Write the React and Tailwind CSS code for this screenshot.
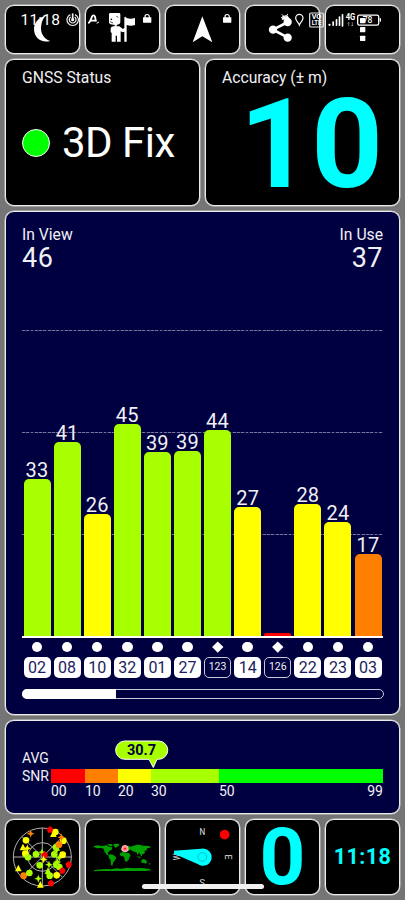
import clsx from 'clsx';

const SATELLITES = [
  { id: '02', snr: 33, height: 157.5, color: 'bg-[#a8ff00]' },
  { id: '08', snr: 41, height: 194.5, color: 'bg-[#a8ff00]' },
  { id: '10', snr: 26, height: 122.5, color: 'bg-[#ffff00]' },
  { id: '32', snr: 45, height: 212, color: 'bg-[#a8ff00]' },
  { id: '01', snr: 39, height: 184.5, color: 'bg-[#a8ff00]' },
  { id: '27', snr: 39, height: 185.5, color: 'bg-[#a8ff00]' },
  { id: '123', snr: 44, height: 206, color: 'bg-[#a8ff00]', sbas: true },
  { id: '14', snr: 27, height: 129.5, color: 'bg-[#ffff00]' },
  { id: '126', snr: null, height: 3, color: 'bg-[#ff0000]', sbas: true },
  { id: '22', snr: 28, height: 132.5, color: 'bg-[#ffff00]' },
  { id: '23', snr: 24, height: 114.5, color: 'bg-[#ffff00]' },
  { id: '03', snr: 17, height: 82.5, color: 'bg-[#ff8000]' },
];

const SCALE = [
  { label: '00', className: 'w-[34px] bg-[#ff0000]' },
  { label: '10', className: 'w-[33px] bg-[#ff8000]' },
  { label: '20', className: 'w-[33px] bg-[#ffff00]' },
  { label: '30', className: 'w-[68px] bg-[#a8ff00]' },
  { label: '50', className: 'w-[164px] bg-[#00ff00]' },
];

// [shape, x, y, color]
const SKY = [
  ['c', 78, 76, '#ffff00'],
  ['t', 69, 97, '#ffff00'],
  ['s', 82, 100, '#ffff00'],
  ['c', 76, 116, '#ffff00'],
  ['c', 84, 127, '#a8ff00'],
  ['s', 92, 56, '#ff8000'],
  ['c', 166, 51, '#ffff00'],
  ['t', 160, 57, '#ffff00'],
  ['p', 150, 44, '#ff0000'],
  ['c', 190, 77, '#ffff00'],
  ['s', 184, 67, '#ff8000'],
  ['c', 168, 97, '#a8ff00'],
  ['c', 177, 89, '#ff8000'],
  ['c', 108, 118, '#a8ff00'],
  ['s', 126, 112, '#a8ff00'],
  ['c', 163, 118, '#a8ff00'],
  ['s', 170, 105, '#a8ff00'],
  ['s', 178, 128, '#a8ff00'],
  ['c', 188, 119, '#ffff00'],
  ['p', 134, 120, '#ff0000'],
  ['s', 131, 133, '#ffff00'],
  ['c', 119, 151, '#a8ff00'],
  ['s', 147, 149, '#a8ff00'],
  ['c', 169, 149, '#a8ff00'],
  ['c', 178, 156, '#a8ff00'],
  ['s', 172, 141, '#a8ff00'],
  ['p', 206, 149, '#ff0000'],
  ['p', 187, 167, '#ff0000'],
  ['t', 55, 160, '#ffff00'],
  ['c', 71, 182, '#ff8000'],
  ['c', 88, 174, '#a8ff00'],
  ['t', 144, 168, '#a8ff00'],
  ['c', 149, 182, '#a8ff00'],
  ['c', 170, 181, '#ffff00'],
  ['s', 115, 191, '#a8ff00'],
  ['t', 121, 209, '#ffff00'],
  ['p', 153, 205, '#ff0000'],
];

const FRAME = 'overflow-hidden rounded-[9px] border border-[#ececec] shadow-[0_0_0_0.5px_#cccccc]';

function Tile({ className, children }) {
  return <div className={clsx(FRAME, 'bg-black', className)}>{children}</div>;
}

function Lock({ x }) {
  return (
    <g transform={`translate(${x} 0)`}>
      <path d="M8 54V50a6.5 6.5 0 0 1 13 0v4" fill="none" stroke="#fff" strokeWidth="3.5" />
      <rect x="2" y="52" width="25" height="16" rx="1" fill="#fff" />
    </g>
  );
}

function StatusBar() {
  return (
    <div className="absolute top-3 left-0 flex h-4 w-full items-start text-white">
      <span className="ml-[20.5px] w-[45.5px] text-[15.5px] leading-4 tracking-[0.2px]">11:18</span>
      <svg className="h-4 w-[13px]" viewBox="198 36 39 48" fill="none" stroke="#f4f4f4" strokeWidth="3.6">
        <path d="M211 44a17 17 0 1 0 14 0M212 51a10 10 0 1 0 12 0" />
        <path d="M218 40v17" strokeWidth="5" />
        <circle cx="218" cy="59" r="3" fill="#fff" />
      </svg>
      <svg className="ml-2 h-4 w-[13px]" viewBox="261 36 39 48" fill="none" stroke="#fff" strokeWidth="5.5">
        <path d="M265 70c6-5 8-12 11-20 2-5 7-5 9 0l3 15M271 62h14" />
        <path d="m290 70 7-4" strokeWidth="3" />
      </svg>
      <svg className="ml-[42px] h-4 w-[10px]" viewBox="426 36 30 48">
        <Lock x={427} />
      </svg>
      <svg className="ml-[70px] h-4 w-[10px]" viewBox="666 36 30 48">
        <Lock x={667} />
      </svg>
      <svg className="ml-12 h-4 w-[10px]" viewBox="840 36 30 48" fill="none" stroke="#fff" strokeWidth="3">
        <path d="m846 43 6 7M863 42l-4 8M843 54l7-5 9-2 7 6" />
        <path d="M848 49h16l5 10h-24z" fill="#fff" stroke="none" />
      </svg>
      <svg className="ml-[5px] h-4 w-[10px]" viewBox="885 36 30 48" fill="none" stroke="#fff" strokeWidth="3.6">
        <path d="M898 75c-3-8-11-12-11-21a11 11 0 0 1 22 0c0 9-8 13-11 21z" />
      </svg>
      <svg className="ml-1 h-4 w-[15px]" viewBox="927 36 45 48">
        <rect x="929" y="39" width="41" height="42" rx="4" fill="none" stroke="#eee" strokeWidth="3.5" />
        <text x="935" y="57" fill="#fff" fontSize="19" fontWeight="700" textLength="29" lengthAdjust="spacingAndGlyphs">
          VO
        </text>
        <text x="935" y="76" fill="#fff" fontSize="19" fontWeight="700" textLength="29" lengthAdjust="spacingAndGlyphs">
          LTE
        </text>
      </svg>
      <svg className="ml-1 h-4 w-4" viewBox="984 36 48 48" fill="#fff">
        <rect x="986" y="71" width="5" height="7" rx="2" />
        <rect x="997" y="64" width="5" height="14" rx="2" />
        <rect x="1007" y="57" width="5" height="21" rx="2" />
        <rect x="1016" y="49" width="5" height="29" rx="2" />
        <rect x="1025" y="42" width="5" height="38" rx="2" />
      </svg>
      <svg className="ml-px h-4 w-[11px]" viewBox="1035 36 33 48">
        <text x="1037" y="61" fill="#fff" fontSize="27" fontWeight="700" textLength="29" lengthAdjust="spacingAndGlyphs">
          4G
        </text>
        <path
          d="M1046 78V67m-3 3 3-3 3 3M1057 67v11m-3-3 3 3 3-3"
          fill="none"
          stroke="#aaa"
          strokeWidth="2"
        />
      </svg>
      <svg className="ml-px h-4 w-[25px]" viewBox="1071 36 75 48">
        <rect x="1073" y="45.5" width="63" height="30" rx="5" fill="none" stroke="#fff" strokeWidth="4" />
        <rect x="1139" y="54" width="4" height="11" rx="2" fill="#fff" />
        <text x="1088" y="70" fill="#fff" fontSize="26" fontWeight="500">
          78
        </text>
      </svg>
    </div>
  );
}

function Toolbar() {
  return (
    <div className="grid h-[49px] shrink-0 grid-cols-5 gap-[5px]">
      <Tile>
        <svg className="size-full" viewBox="18 18 219 141" fill="#fff">
          <path d="M137 47C115 52 102 68 102 87c0 25 20 43 49 36-18-6-28-20-28-39 0-15 5-28 14-37z" />
        </svg>
      </Tile>
      <Tile>
        <svg className="size-full" viewBox="258 18 219 141" fill="#fff">
          <path d="M331 39H357Q361 39 361 43V67Q361 72 356 73L350 75V79H358L369 87 373 84V53Q373 50 376 50L380 54Q392 59 405 54V75Q392 80 380 75V125H373V95L368 97 362 94V125H351V107H347V125H335V99L332 96V85Q334 79 340 79H344V75L332 73Q327 72 327 67V43Q327 39 331 39Z" />
          <circle cx="334" cy="58" r="2.5" fill="#000" />
          <path d="m330 65 9 4M349 49l6 3" fill="none" stroke="#000" strokeWidth="2" />
        </svg>
      </Tile>
      <Tile>
        <svg className="size-full" viewBox="498 18 219 141" fill="#fff">
          <path d="m607 49 30 78-30-18-29 18z" />
        </svg>
      </Tile>
      <Tile>
        <svg className="size-full" viewBox="738 18 219 141" fill="#fff">
          <path d="m864 66-45 23 45 24" fill="none" stroke="#fff" strokeWidth="8" />
          <circle cx="863" cy="66" r="12.5" />
          <circle cx="819" cy="89" r="12.5" />
          <circle cx="863" cy="113" r="12.5" />
        </svg>
      </Tile>
      <Tile>
        <svg className="size-full" viewBox="978 18 219 141" fill="#fff">
          <rect x="1080" y="54" width="16" height="16" rx="2" />
          <rect x="1080" y="81" width="16" height="16" rx="2" />
          <rect x="1080" y="107" width="16" height="16" rx="2" />
        </svg>
      </Tile>
    </div>
  );
}

function SatelliteChart() {
  return (
    <section className={clsx(FRAME, 'h-[504px] shrink-0 bg-[#000040] px-4 pt-[13px]')}>
      <div className="flex h-[105px] justify-between text-[15.7px] leading-[19px]">
        <div>
          <div>In View</div>
          <div className="text-[27px] leading-[29px] tracking-[0.5px]">46</div>
        </div>
        <div className="text-right">
          <div>In Use</div>
          <div className="text-[27px] leading-[29px] tracking-[0.5px]">37</div>
        </div>
      </div>

      <div className="relative h-[306px]">
        <div className="absolute inset-0 grid grid-rows-3">
          {[0, 1, 2].map((row) => (
            <div key={row}>
              <div className="h-px bg-[repeating-linear-gradient(90deg,#75759b_0_2.8px,#20205a_2.8px_4.3px)]" />
            </div>
          ))}
        </div>
        <div className="relative flex h-full items-end gap-[3.1px] pl-[1.5px]">
          {SATELLITES.map((sat) => (
            <div key={sat.id} className="flex w-[27px] shrink-0 flex-col items-center">
              <span className="text-[20px] leading-[17px] tracking-[0.2px]">{sat.snr}</span>
              <div
                className={clsx('w-full', sat.snr ? 'rounded-t-[5px]' : 'rounded-t-[2px]', sat.color)}
                style={{ height: sat.height }}
              />
            </div>
          ))}
        </div>
      </div>

      <div className="h-[1.5px] bg-white" />
      <div className="flex gap-[3.1px] pt-1 pl-[1.5px]">
        {SATELLITES.map((sat) => (
          <div key={sat.id} className="flex w-[27px] shrink-0 flex-col items-center">
            <div className="flex h-[11px] items-center">
              {sat.sbas ? (
                <div className="size-[7.5px] rotate-45 bg-white" />
              ) : (
                <div className="size-[10.6px] rounded-full bg-white" />
              )}
            </div>
            <div
              className={clsx(
                'mt-1 flex h-[21px] w-full items-center justify-center rounded-[5px]',
                sat.sbas
                  ? 'border border-[#c8c8d8] text-[10.5px]'
                  : 'bg-white pt-px text-base text-[#1c1c5c]',
              )}
            >
              {sat.id}
            </div>
          </div>
        ))}
      </div>

      <div className="mt-[11px] -mr-px h-[10px] rounded-full border border-[#c8c8d8]">
        <div className="-mt-px -ml-px h-[10px] w-[94px] rounded-l-full rounded-r-[3px] bg-white" />
      </div>
    </section>
  );
}

function SnrPanel() {
  return (
    <section className={clsx(FRAME, 'flex h-[94px] shrink-0 bg-[#000040] pl-4 text-[14px]')}>
      <div className="w-[29px] pt-[29px] leading-[17.5px]">
        <div>AVG</div>
        <div>SNR</div>
      </div>
      <div className="w-[332px] pt-[19px]">
        <svg className="ml-16 block h-[29px] w-[54px]" viewBox="0 0 54 29">
          <path
            d="M9.8 1H43.6a9 9 0 0 1 0 18.3H42L38.3 27.5 34 19.3H9.8A9 9 0 0 1 9.8 1z"
            fill="#a8ff00"
            stroke="#fff"
            strokeWidth="1"
          />
          <text x="26.5" y="15.2" textAnchor="middle" fill="#000040" fontSize="14.5" fontWeight="700">
            30.7
          </text>
        </svg>
        <div className="flex">
          {SCALE.map((band) => (
            <div key={band.label} className={clsx('h-[13.5px]', band.className)} />
          ))}
        </div>
        <div className="flex text-[14px] leading-4">
          <span className="w-[34px]">00</span>
          <span className="w-[33px]">10</span>
          <span className="w-[33px]">20</span>
          <span className="w-[68px]">30</span>
          <span className="flex-1">50</span>
          <span>99</span>
        </div>
      </div>
    </section>
  );
}

function SkyMarker({ shape, x, y, color }) {
  const at = `translate(${x} ${y})`;
  if (shape === 'c') return <circle cx={x} cy={y} r="10" fill={color} />;
  if (shape === 't') return <path transform={at} d="M0-11 10 9H-10z" fill={color} />;
  if (shape === 'p') return <path transform={at} d="M0-11 10-3 6 9H-6L-10-3z" fill={color} />;
  return (
    <path
      transform={at}
      d="M0-12 3.5-3.5 12 0 3.5 3.5 0 12-3.5 3.5-12 0-3.5-3.5z"
      fill={color}
      stroke="#00000050"
      strokeWidth="1"
    />
  );
}

function SkyPlot() {
  return (
    <svg className="size-full" viewBox="18 15 219 222">
      <g fill="none" stroke="#b0b0b0" strokeWidth="3">
        <circle cx="127" cy="126" r="87" />
        <circle cx="127" cy="126" r="43" />
        <path d="M40 126h174M127 39v174M66 65l122 122M188 65 66 187" />
      </g>
      {SKY.map(([shape, x, y, color]) => (
        <SkyMarker key={`${x}-${y}`} shape={shape} x={x} y={y} color={color} />
      ))}
    </svg>
  );
}

function WorldMap() {
  return (
    <svg className="size-full" viewBox="258 15 219 222">
      <g fill="#00a000">
        <path d="m280 94 12-3 14 2 14-2 8 5 4-2 5 4-2 6-7 4-5 6 1 4 7 3-2 2-9-4-6-8-3-10-8-2-12 1-9-4z" />
        <path d="m321 88 14-1 4 5-9 2zM340 87l15-1 4 3-7 6-6 3-4-4z" />
        <path d="m331 118 8 1 10 8-3 7-5 6-3 7-1 6-4-3-1-14-6-8 1-7z" />
        <path d="m388 100 3-5 10-3 9-3 10 0 8 3 13 0 12 3-4 4-8 1-2 7-6 0 2 6-5 5-4-1 0 8-5-6-3-7-5 8-4-8-7-2-6-3z" />
        <path d="m362 106 3-8 8-6 6 1 9-1 6 10-8 6-10 1z" />
        <path d="m360 115 7-4 12 2 8 1 5 8-4 5-2 7-6 6-5-1-3-14-9-2-4-5z" />
        <path d="m408 124 10 1 6 4-4 1zM424 136l6-4 8 3 3 7-4 4-6-3-7 1zM448 143l4 3-5 4z" />
        <path d="m281 166 12-2 22-2 20 1 14-3 14 1 20-3 20 2 22-1 24 3 4 4-16 2H300l-18 1z" />
      </g>
      <circle cx="375" cy="101" r="9.5" fill="#ff8080" stroke="#ffc0c0" strokeWidth="3" />
      <circle cx="375" cy="101" r="4" fill="#ff0000" stroke="#fff" strokeWidth="1" />
    </svg>
  );
}

function Compass() {
  return (
    <svg className="size-full" viewBox="18 15 219 222">
      <g fill="#e4e4e4" fontSize="28" textAnchor="middle">
        <text x="127" y="59" textLength="17" lengthAdjust="spacingAndGlyphs">
          N
        </text>
        <text transform="translate(194 126) rotate(90)" textLength="15" lengthAdjust="spacingAndGlyphs">
          E
        </text>
        <text transform="translate(127 193) rotate(180)" textLength="16" lengthAdjust="spacingAndGlyphs">
          S
        </text>
        <text transform="translate(60 126) rotate(-90)" textLength="20" lengthAdjust="spacingAndGlyphs">
          W
        </text>
      </g>
      <circle cx="194" cy="59" r="14.5" fill="#ff0000" />
      <path d="M42 107 124 101a26 26 0 1 1-11 46L42 116z" fill="#00ffff" />
      <circle cx="127" cy="126" r="13" fill="none" stroke="#00b4c0" strokeWidth="2.5" />
    </svg>
  );
}

export default function App() {
  return (
    <div className="relative flex h-[900px] w-[405px] flex-col gap-[5px] overflow-hidden bg-[#757575] p-[5px] font-['Roboto',sans-serif] text-[#f0f0f4]">
      <Toolbar />

      <div className="grid h-[147px] shrink-0 grid-cols-2 gap-[5px]">
        <Tile className="px-4 pt-[9px]">
          <div className="text-[15.7px] leading-[18px]">GNSS Status</div>
          <div className="flex items-center gap-[12px] pt-[31px]">
            <div className="size-7 rounded-full border border-white bg-[#00ff00]" />
            <div className="text-[42px] leading-[50px] tracking-[-0.5px] text-white">3D Fix</div>
          </div>
        </Tile>
        <Tile className="px-4 pt-[9px]">
          <div className="text-[15.7px] leading-[18px]">Accuracy (± m)</div>
          <div className="text-right text-[125px] leading-[115px] font-bold text-[#00ffff]">10</div>
        </Tile>
      </div>

      <SatelliteChart />
      <SnrPanel />

      <div className="grid h-[76px] shrink-0 grid-cols-5 gap-[5px]">
        <Tile>
          <SkyPlot />
        </Tile>
        <Tile>
          <WorldMap />
        </Tile>
        <Tile>
          <Compass />
        </Tile>
        <Tile className="text-center text-[80px] leading-[74px] font-bold text-[#00ffff]">0</Tile>
        <Tile className="flex items-center justify-center text-[21.5px] leading-none font-bold tracking-[0.4px] text-[#00ffff]">
          11:18
        </Tile>
      </div>

      <StatusBar />
      <div className="absolute bottom-[11px] left-[142px] h-[5px] w-[122px] rounded-full bg-[#f0f0f0]" />
    </div>
  );
}
